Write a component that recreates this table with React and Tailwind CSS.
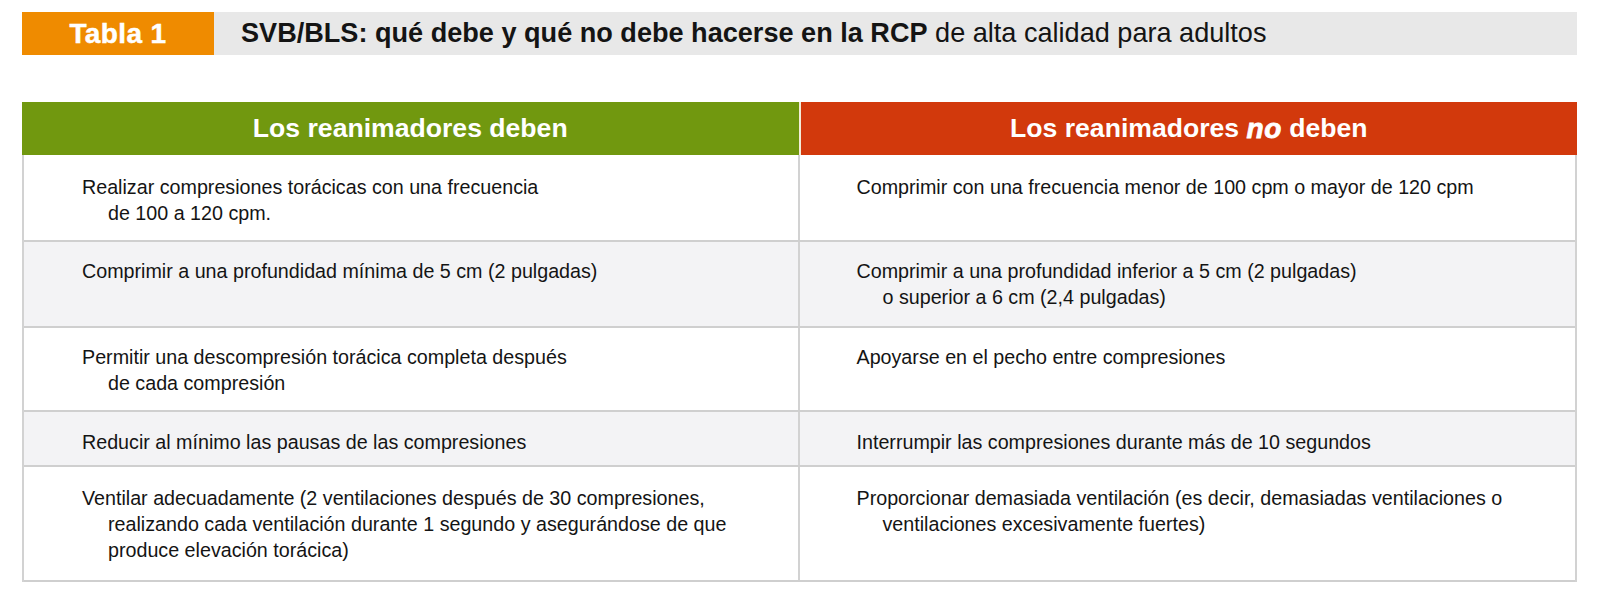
import React from "react";

const rows = [
  {
    h: "h-[87px]",
    pt: "pt-[19px]",
    bg: "bg-white",
    l: ["Realizar compresiones torácicas con una frecuencia", "de 100 a 120 cpm."],
    r: ["Comprimir con una frecuencia menor de 100 cpm o mayor de 120 cpm"],
  },
  {
    h: "h-[86px]",
    pt: "pt-[16px]",
    bg: "bg-[#f3f3f5]",
    l: ["Comprimir a una profundidad mínima de 5 cm (2 pulgadas)"],
    r: ["Comprimir a una profundidad inferior a 5 cm (2 pulgadas)", "o superior a 6 cm (2,4 pulgadas)"],
  },
  {
    h: "h-[84px]",
    pt: "pt-[16px]",
    bg: "bg-white",
    l: ["Permitir una descompresión torácica completa después", "de cada compresión"],
    r: ["Apoyarse en el pecho entre compresiones"],
  },
  {
    h: "h-[55px]",
    pt: "pt-[17px]",
    bg: "bg-[#f3f3f5]",
    l: ["Reducir al mínimo las pausas de las compresiones"],
    r: ["Interrumpir las compresiones durante más de 10 segundos"],
  },
  {
    h: "h-[115px]",
    pt: "pt-[18px]",
    bg: "bg-white",
    l: [
      "Ventilar adecuadamente (2 ventilaciones después de 30 compresiones,",
      "realizando cada ventilación durante 1 segundo y asegurándose de que",
      "produce elevación torácica)",
    ],
    r: [
      "Proporcionar demasiada ventilación (es decir, demasiadas ventilaciones o",
      "ventilaciones excesivamente fuertes)",
    ],
  },
];

function Cell({ lines, pl }) {
  return (
    <div className={`${pl} flex flex-col`}>
      {lines.map((t, i) => (
        <div key={i} className={`whitespace-nowrap leading-[26px] ${i > 0 ? "pl-[26px]" : ""}`}>
          {t}
        </div>
      ))}
    </div>
  );
}

export default function App() {
  return (
    <div className="w-[1600px] h-[598px] bg-white text-[#141414] font-['Liberation_Sans',Arial,sans-serif] overflow-hidden">
      <div className="pt-[12px] pl-[22px]">
        <div className="flex h-[43px] w-[1555px]">
          <div className="w-[192px] bg-[#ef8b00] flex items-center justify-center text-white font-bold text-[28px] tracking-[0.4px] [-webkit-text-stroke:0.5px_white]">
            Tabla 1
          </div>
          <div className="flex-1 bg-[#e8e8e8] flex items-center pl-[27px] text-[27.1px] whitespace-nowrap">
            <span className="font-bold">SVB/BLS: qué debe y qué no debe hacerse en la RCP</span>
            <span>&nbsp;de alta calidad para adultos</span>
          </div>
        </div>
      </div>

      <div className="mt-[47px] ml-[22px] w-[1555px]">
        <div className="grid grid-cols-2 h-[53px] gap-[2px] bg-[#f3ecd8] text-white font-bold text-[26.6px]">
          <div className="bg-[#71980f] flex items-center justify-center">Los reanimadores deben</div>
          <div className="bg-[#d2390c] flex items-center justify-center">
            Los reanimadores&nbsp;
            <span className="italic font-black text-[28px] tracking-[0.5px] [-webkit-text-stroke:0.8px_white]">no</span>
            &nbsp;deben
          </div>
        </div>
        <div className="border-l-2 border-r-2 border-[#d2d2d2] text-[19.7px]">
          {rows.map((row, i) => (
            <div
              key={i}
              className={`grid grid-cols-2 ${row.h} ${row.bg} border-b-2 border-[#cfcfcf]`}
            >
              <div className={`${row.pt} border-r-2 border-[#d2d2d2]`}>
                <Cell lines={row.l} pl="pl-[58px]" />
              </div>
              <div className={`${row.pt}`}>
                <Cell lines={row.r} pl="pl-[57px]" />
              </div>
            </div>
          ))}
        </div>
      </div>
    </div>
  );
}
